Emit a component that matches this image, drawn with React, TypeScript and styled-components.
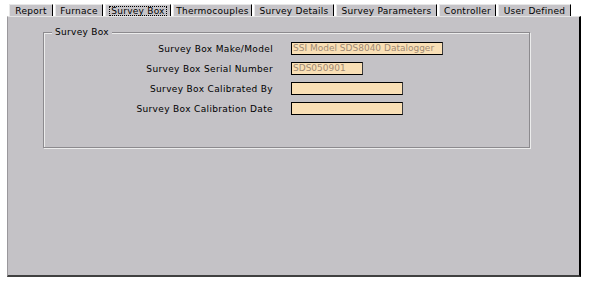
import React from "react";
import styled, { createGlobalStyle } from "styled-components";

const GlobalStyle = createGlobalStyle`
  html, body {
    margin: 0;
    padding: 0;
    background: #ffffff;
  }
  body {
    font-family: "DejaVu Sans", Verdana, sans-serif;
    font-size: 9px;
    color: #000;
  }
`;

const tabs = [
  { name: "Report", width: 44 },
  { name: "Furnace", width: 48 },
  { name: "Survey Box", width: 66 },
  { name: "Thermocouples", width: 79 },
  { name: "Survey Details", width: 80 },
  { name: "Survey Parameters", width: 101 },
  { name: "Controller", width: 57 },
  { name: "User Defined", width: 73 },
];

const fields = [
  { label: "Survey Box Make/Model", value: "SSI Model SDS8040 Datalogger", width: 152 },
  { label: "Survey Box Serial Number", value: "SDS050901", width: 72 },
  { label: "Survey Box Calibrated By", value: "", width: 112 },
  { label: "Survey Box Calibration Date", value: "", width: 112 },
];

const App = () => {
  return (
    <>
      <GlobalStyle />
      <Window>
        <TabBar>
          {tabs.map((t) => (
            <Tab key={t.name} style={{ width: t.width }}>
              <TabText $active={t.name === "Survey Box"}>{t.name}</TabText>
            </Tab>
          ))}
        </TabBar>
        <Panel>
          <Group>
            <Legend>Survey Box</Legend>
            <Form>
              {fields.map((f) => (
                <Row key={f.label}>
                  <Label>{f.label}</Label>
                  <Field style={{ width: f.width }}>{f.value}</Field>
                </Row>
              ))}
            </Form>
          </Group>
        </Panel>
      </Window>
    </>
  );
};

export default App;

const Window = styled.div`
  width: 595px;
  height: 285px;
  padding: 4px 0 0 7px;
  box-sizing: border-box;
  display: flex;
  flex-direction: column;
`;

const TabBar = styled.div`
  display: flex;
  padding-left: 2px;
  gap: 2px;
  height: 12px;
`;

const Tab = styled.div`
  height: 12px;
  box-sizing: border-box;
  background: #c6c4c8;
  border-left: 1px solid #e8e8e8;
  border-top: 1px solid #e8e8e8;
  border-right: 1px solid #000;
  display: flex;
  align-items: center;
  justify-content: center;
  line-height: 10px;
  white-space: nowrap;
  letter-spacing: 0.25px;
`;

const TabText = styled.span<{ $active?: boolean }>`
  border: 1px dotted ${(p) => (p.$active ? "#000" : "transparent")};
  padding: 0 1px;
  line-height: 8px;
`;

const Panel = styled.div`
  width: 574px;
  height: 261px;
  box-sizing: border-box;
  background: #c4c2c6;
  border-left: 1px solid #9a989c;
  border-top: 1px solid #e4e4e4;
  border-right: 2px solid #000;
  border-bottom: 2px solid #404040;
  padding: 15px 0 0 35px;
`;

const Group = styled.div`
  position: relative;
  width: 487px;
  height: 116px;
  box-sizing: border-box;
  border: 1px solid #8c8a8e;
  box-shadow: 1px 1px 0 #ececec, inset 1px 1px 0 #ececec;
  padding: 9px 0 0 0;
`;

const Legend = styled.span`
  position: absolute;
  top: -6px;
  left: 8px;
  padding: 0 3px;
  background: #c4c2c6;
  line-height: 11px;
  letter-spacing: 0.3px;
`;

const Form = styled.div`
  display: flex;
  flex-direction: column;
  gap: 7px;
`;

const Row = styled.div`
  display: flex;
  align-items: center;
  height: 13px;
`;

const Label = styled.div`
  width: 229px;
  text-align: right;
  white-space: nowrap;
  margin-right: 18px;
  letter-spacing: 0.35px;
`;

const Field = styled.div`
  height: 13px;
  box-sizing: border-box;
  background: #f9dfb5;
  border: 1px solid #000;
  border-right-color: #3a3a3a;
  color: #a08a74;
  padding-left: 1px;
  line-height: 11px;
  white-space: nowrap;
  overflow: hidden;
`;
